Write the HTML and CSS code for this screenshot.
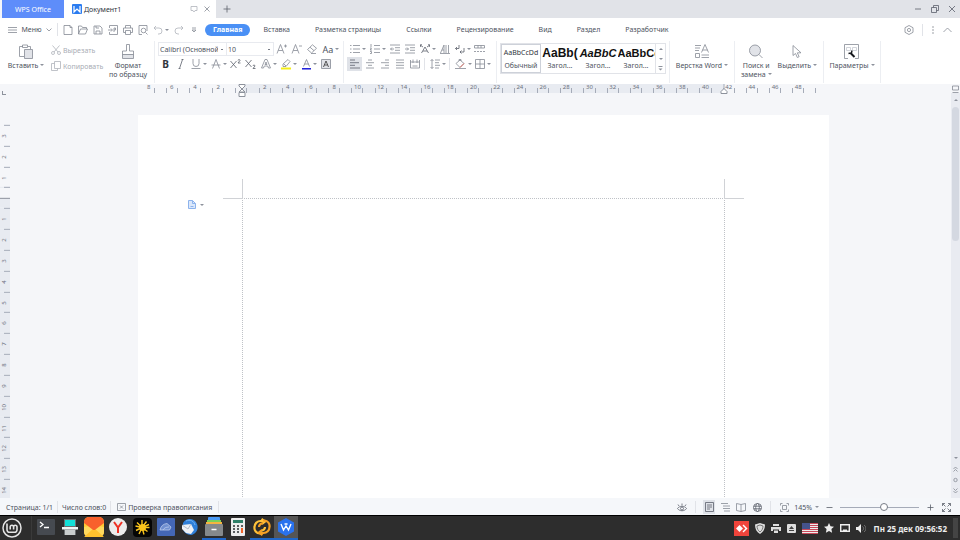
FILE: index.html
```html
<!DOCTYPE html>
<html lang="ru">
<head>
  <meta charset="UTF-8">
  <title>Документ1 - WPS Office</title>
  <link rel="stylesheet" href="styles.css">
</head>
<body>
  <header class="titlebar">
    <button class="home-tab">WPS Office</button>
    <div class="doc-tab">
      <svg width="10" height="10" viewBox="0 0 10 10"><rect width="10" height="10" rx="1" fill="#2b7cf0"/><path d="M2 2v6l3-3 3 3V2" fill="none" stroke="#fff" stroke-width="1.200"/></svg>
      <span class="doc-name">Документ1</span>
      <svg width="8" height="8" viewBox="0 0 8 8" class="thin pale"><path d="M1 1.500h6v4H5L4 7 3 5.500H1z"/></svg>
      <button class="icon-btn" aria-label="Закрыть вкладку"><svg width="8" height="8" viewBox="0 0 8 8" class="thin"><path d="M1.500 1.500l5 5m0-5l-5 5"/></svg></button>
    </div>
    <button class="new-tab" aria-label="Новая вкладка"><svg width="8" height="8" viewBox="0 0 8 8" class="thin dark"><path d="M4 .5v7M.5 4h7"/></svg></button>
    <div class="window-buttons">
      <button aria-label="Свернуть"><svg width="8" height="8" viewBox="0 0 8 8" class="thin dark"><path d="M1 4h6"/></svg></button>
      <button aria-label="Развернуть"><svg width="8" height="8" viewBox="0 0 8 8" class="thin dark"><path d="M.5 2.500h5v5h-5zM2.500 2.500v-2h5v5h-2"/></svg></button>
      <button aria-label="Закрыть"><svg width="8" height="8" viewBox="0 0 8 8" class="thin dark"><path d="M1 1l6 6m0-6L1 7"/></svg></button>
    </div>
  </header>

  <nav class="menubar">
    <button class="menu-btn">
      <svg width="9" height="8" viewBox="0 0 9 8" class="thin"><path d="M0 1.500h9M0 4h9M0 6.500h9"/></svg>
      <span>Меню</span>
      <svg width="6" height="4" viewBox="0 0 6 4" class="thin"><path d="M.5.5L3 3 5.500.5"/></svg>
    </button>
    <div class="quick">
      <button aria-label="Создать"><svg width="10" height="10" viewBox="0 0 10 10" class="thin"><path d="M1 .5h6l2 2v7H1zM7 .5v2h2"/></svg></button>
      <button aria-label="Открыть"><svg width="10" height="10" viewBox="0 0 10 10" class="thin"><path d="M.5 9V1h3l1 1.500h4V4M.5 9l2-5h7l-2 5z"/></svg></button>
      <button aria-label="Сохранить"><svg width="10" height="10" viewBox="0 0 10 10" class="thin"><path d="M1 1h6l2 2v6H1zM3 9V6h4v3M3 1v2h3"/></svg></button>
      <button aria-label="Экспорт в PDF"><svg width="10" height="10" viewBox="0 0 10 10" class="thin"><path d="M1.500 3V.5h8v9h-8V7M0 5h4M3 3.500L4.500 5 3 6.500M6 7V3h1.500v2H6"/></svg></button>
      <button aria-label="Печать"><svg width="10" height="10" viewBox="0 0 10 10" class="thin"><path d="M2.500 3V.5h5V3M2.500 7.500h-2V3h9v4.500h-2M2.500 5.500h5v4h-5z"/></svg></button>
      <button aria-label="Просмотр"><svg width="10" height="10" viewBox="0 0 10 10" class="thin"><path d="M4 9.500H1v-9h8V6M7.500 7.500l2 2"/><circle cx="5.500" cy="5.500" r="2.300"/></svg></button>
      <button aria-label="Отменить" class="split"><svg width="10" height="10" viewBox="0 0 10 10" class="thin pale"><path d="M3 1L1 3l2 2M1 3h5a3 3 0 0 1 0 6H5"/></svg><i class="caret"></i></button>
      <button aria-label="Повторить"><svg width="10" height="10" viewBox="0 0 10 10" class="thin pale"><path d="M7 1l2 2-2 2M9 3H4a3 3 0 0 0 0 6h1"/></svg></button>
      <button aria-label="Настроить панель"><svg width="6" height="6" viewBox="0 0 6 6" class="thin"><path d="M1 1h4M1 3h4L3 5z"/></svg></button>
    </div>
    <div class="tabs">
      <button class="tab active">Главная</button>
      <button class="tab">Вставка</button>
      <button class="tab">Разметка страницы</button>
      <button class="tab">Ссылки</button>
      <button class="tab">Рецензирование</button>
      <button class="tab">Вид</button>
      <button class="tab">Раздел</button>
      <button class="tab">Разработчик</button>
    </div>
    <div class="menubar-end">
      <button aria-label="Настройки"><svg width="10" height="10" viewBox="0 0 10 10" class="thin"><path d="M5 .5l4 2.200v4.600L5 9.500 1 7.300V2.700z"/><circle cx="5" cy="5" r="1.600"/></svg></button>
      <span class="vsep"></span>
      <button aria-label="Ещё"><svg width="4" height="10" viewBox="0 0 4 10" fill="#777c86"><circle cx="2" cy="2" r=".7"/><circle cx="2" cy="5" r=".7"/><circle cx="2" cy="8" r=".7"/></svg></button>
      <button aria-label="Свернуть ленту"><svg width="9" height="6" viewBox="0 0 9 6" class="thin"><path d="M.5 5l4-4 4 4"/></svg></button>
    </div>
  </nav>

  <section class="ribbon">
    <div class="group clipboard">
      <button class="big paste">
        <svg width="14" height="15" viewBox="0 0 14 15" class="thin"><path d="M4 2.500H.5v10H5M9 2.500h2.500V5M3.500 1h5v2.500h-5z"/><path d="M5.500 5.500h8v9h-8z" fill="#e1e3e8"/></svg>
        <span>Вставить<i class="caret"></i></span>
      </button>
      <div class="stack">
        <button class="side" disabled><svg width="10" height="10" viewBox="0 0 10 10" class="thin pale"><path d="M1.500.5L7 7M8.500.5L3 7"/><circle cx="2" cy="8" r="1.500"/><circle cx="8" cy="8" r="1.500"/></svg>Вырезать</button>
        <button class="side" disabled><svg width="10" height="10" viewBox="0 0 10 10" class="thin pale"><path d="M3.500.5h6v7h-6zM3.500 2.500h-3v7h6v-2"/></svg>Копировать</button>
      </div>
      <button class="big format">
        <svg width="12" height="15" viewBox="0 0 12 15" class="thin"><path d="M4.500.5h3V7h4v4H.5V7h4z"/><path d="M.5 10.500h11v4H.5z" fill="#e1e3e8"/></svg>
        <span>Формат<br>по образцу</span>
      </button>
    </div>

    <div class="group font">
      <div class="row">
        <select class="font-name" aria-label="Шрифт"><option>Calibri (Основной текст)</option></select>
        <select class="font-size" aria-label="Размер шрифта"><option>10</option></select>
        <button class="tool" aria-label="Увеличить шрифт"><svg width="12" height="10" viewBox="0 0 12 10" class="thin"><path d="M1 9.500l3.500-9 3.500 9M2.300 6.500h4.500M8 2h3M9.500.5v3"/></svg></button>
        <button class="tool" aria-label="Уменьшить шрифт"><svg width="12" height="10" viewBox="0 0 12 10" class="thin"><path d="M1 9.500l3.500-9 3.500 9M2.300 6.500h4.500M8 2h3"/></svg></button>
        <button class="tool" aria-label="Очистить формат"><svg width="10" height="10" viewBox="0 0 10 10" class="thin"><path d="M.5 5.500L5.500.8l4 3.500L4.500 9zM3 3.200l4 3.500M4 9.500h5"/></svg></button>
        <button class="tool split wide" aria-label="Регистр"><span class="glyph">Aa</span><i class="caret"></i></button>
      </div>
      <div class="row">
        <button class="tool" aria-label="Полужирный"><b class="glyph bold">B</b></button>
        <button class="tool" aria-label="Курсив"><svg width="8" height="10" viewBox="0 0 8 10" class="thin dark"><path d="M5.500.5l-3 9M4.500.5h2M1.500 9.500h2"/></svg></button>
        <button class="tool split" aria-label="Подчёркнутый"><svg width="10" height="10" viewBox="0 0 10 10" class="thin"><path d="M2 0v4.500a3 3 0 0 0 6 0V0M.5 9.500h9"/></svg><i class="caret"></i></button>
        <button class="tool split" aria-label="Зачёркнутый"><svg width="10" height="10" viewBox="0 0 10 10" class="thin"><path d="M1.500 9.500l3.500-9 3.500 9M.5 6h9"/></svg><i class="caret"></i></button>
        <button class="tool" aria-label="Надстрочный"><svg width="11" height="10" viewBox="0 0 11 10" class="thin dark"><path d="M.5 2l6 7m0-7l-6 7M8 1.500c0-1.300 2-1.300 2 0L8 4h2.500"/></svg></button>
        <button class="tool" aria-label="Подстрочный"><svg width="11" height="10" viewBox="0 0 11 10" class="thin dark"><path d="M.5 1l6 7m0-7l-6 7M8 7c0-1.300 2-1.300 2 0L8 9.500h2.500"/></svg></button>
        <button class="tool split" aria-label="Эффекты текста"><svg width="10" height="10" viewBox="0 0 10 10" class="thin"><path d="M.5 9L4 .5h2L9.500 9h-2l-.8-2H3.300l-.8 2zM4 5.500h2L5 3z"/></svg><i class="caret"></i></button>
        <button class="tool split" aria-label="Цвет выделения"><svg width="10" height="11" viewBox="0 0 10 11" class="thin"><path d="M2 7.500V5L7 .5l2 2L5 7.500zM3 5l2 2"/><path d="M0 9.500h10" stroke="#f4ee1a" stroke-width="2"/></svg><i class="caret"></i></button>
        <button class="tool split" aria-label="Цвет шрифта"><svg width="9" height="11" viewBox="0 0 9 11" class="thin"><path d="M1.500 7.500l3-7 3 7M2.500 5h4"/><path d="M0 9.800h9" stroke="#0a0ad6" stroke-width="1.400"/></svg><i class="caret"></i></button>
        <button class="tool" aria-label="Затенение знаков"><svg width="10" height="10" viewBox="0 0 10 10" class="thin"><path d="M.5.5h9v9h-9z" fill="#e1e3e8"/><path d="M2.500 8L5 2l2.500 6M3.500 6h3" stroke="#333"/></svg></button>
      </div>
    </div>

    <div class="group paragraph">
      <div class="row">
        <button class="tool split" aria-label="Маркеры"><svg width="10" height="10" viewBox="0 0 10 10" class="thin"><path d="M3 1.500h7M3 5h7M3 8.500h7M0 1.500h1.500M0 5h1.500M0 8.500h1.500"/></svg><i class="caret"></i></button>
        <button class="tool split" aria-label="Нумерация"><svg width="10" height="10" viewBox="0 0 10 10" class="thin"><path d="M4 1.500h6M4 5h6M4 8.500h6M1 0v3M0 4h1.500L0 6h2M0 7.500h1.500v2H0"/></svg><i class="caret"></i></button>
        <button class="tool" aria-label="Уменьшить отступ"><svg width="10" height="10" viewBox="0 0 10 10" class="thin"><path d="M0 1h10M5 3.700h5M5 6.300h5M0 9h10M4 5H.5M2 3.500L.5 5 2 6.500"/></svg></button>
        <button class="tool" aria-label="Увеличить отступ"><svg width="10" height="10" viewBox="0 0 10 10" class="thin"><path d="M0 1h10M5 3.700h5M5 6.300h5M0 9h10M0 5h3.500M2 3.500L3.500 5 2 6.500"/></svg></button>
        <button class="tool split" aria-label="Азиатская вёрстка"><svg width="10" height="10" viewBox="0 0 10 10" class="thin dark"><path d="M1.500 9L5 3l3.500 6M3 7h4M0 1l3 2M10 1L7 3M.5 3L0 1l2-.3M9.500 3l.5-2-2-.3"/></svg><i class="caret"></i></button>
        <button class="tool" aria-label="Сортировка"><svg width="10" height="10" viewBox="0 0 10 10" class="thin"><path d="M.5 9L4 1v8M2 6h2M6 1v8M8.500 1v8M0 9.500h10"/></svg></button>
        <button class="tool split" aria-label="Знаки абзаца"><svg width="10" height="10" viewBox="0 0 10 10" class="thin dark"><path d="M4 1v3.500H.5M2 3L.5 4.500 2 6M9 4v4H5M6.500 6.500L5 8l1.500 1.500"/></svg><i class="caret"></i></button>
        <button class="tool" aria-label="Табуляция"><svg width="11" height="10" viewBox="0 0 11 10" class="thin"><path d="M.5 1.500h10v2.500H.5zM4 1.500V4M7 1.500V4"/><path d="M0 7.500h11" stroke-dasharray="2 1"/></svg></button>
      </div>
      <div class="row">
        <button class="tool on" aria-label="По левому краю"><svg width="10" height="10" viewBox="0 0 10 10" class="thin dark"><path d="M0 1h5M0 3.700h9M0 6.300h5M0 9h10"/></svg></button>
        <button class="tool" aria-label="По центру"><svg width="10" height="10" viewBox="0 0 10 10" class="thin"><path d="M3 1h4M1 3.700h8M3 6.300h4M1 9h8"/></svg></button>
        <button class="tool" aria-label="По правому краю"><svg width="10" height="10" viewBox="0 0 10 10" class="thin"><path d="M5 1h4M1 3.700h8M5 6.300h4M1 9h8"/></svg></button>
        <button class="tool" aria-label="По ширине"><svg width="10" height="10" viewBox="0 0 10 10" class="thin"><path d="M1 1h8M1 3.700h8M1 6.300h8M1 9h8"/></svg></button>
        <button class="tool" aria-label="Распределить"><svg width="10" height="10" viewBox="0 0 10 10" class="thin"><path d="M.5 1v8h9V1M.5 3h9M3 .5V4M7 .5V4M2.500 7h5"/></svg></button>
        <span class="vsep"></span>
        <button class="tool split" aria-label="Интервал"><svg width="10" height="10" viewBox="0 0 10 10" class="thin"><path d="M5 1h5M5 3.700h4M5 6.300h5M5 9h4M2 .5v9M.5 2L2 .5 3.500 2M.5 8L2 9.500 3.500 8"/></svg><i class="caret"></i></button>
        <span class="vsep"></span>
        <button class="tool split" aria-label="Заливка"><svg width="11" height="10" viewBox="0 0 11 10" class="thin"><path d="M1 4.500L5 1l4 3.500-4 4zM4 2V.5h2V2M0 9.500h11"/><path d="M5 8.500l4-4" stroke="#e05a4a"/></svg><i class="caret"></i></button>
        <button class="tool split" aria-label="Границы"><svg width="10" height="10" viewBox="0 0 10 10" class="thin"><path d="M.5.5h9v9h-9zM5 .5v9M.5 5h9"/></svg><i class="caret"></i></button>
      </div>
    </div>

    <div class="group styles">
      <div class="gallery">
        <button class="style current"><span class="sample">AaBbCcDd</span><span>Обычный</span></button>
        <button class="style"><span class="sample h1">AaBb(</span><span>Загол...</span></button>
        <button class="style"><span class="sample h2">AaBbC</span><span>Загол...</span></button>
        <button class="style"><span class="sample h3">AaBbCc</span><span>Загол...</span></button>
        <div class="gallery-scroll">
          <button aria-label="Вверх"><i class="caret up"></i></button>
          <button aria-label="Вниз"><i class="caret"></i></button>
          <button aria-label="Все стили"><svg width="5" height="5" viewBox="0 0 5 5"><path d="M.5.5h4" stroke="#8d929c"/><path d="M.5 2.500h4l-2 2z" fill="#8d929c"/></svg></button>
        </div>
      </div>
    </div>

    <div class="group layout">
      <button class="big">
        <svg width="14" height="15" viewBox="0 0 14 15" class="thin"><path d="M0 1.500h6M0 4h5M0 6.500h4M6.500 8.500l3.500-8 3.500 8M7.500 6h5M.5 9.500h4v4h-4zM6.500 11h7.500M6.500 13.500h7.500"/></svg>
        <span>Верстка Word<i class="caret"></i></span>
      </button>
    </div>

    <div class="group editing">
      <button class="big">
        <svg width="14" height="15" viewBox="0 0 14 15" class="thin"><circle cx="6" cy="6.500" r="5.500" fill="#e1e3e8"/><path d="M10 10.500l3.500 3.500"/></svg>
        <span>Поиск и<br>замена<i class="caret"></i></span>
      </button>
      <button class="big">
        <svg width="10" height="15" viewBox="0 0 10 15" class="thin"><path d="M1 1.500v10l2.500-2 1.800 4 1.800-.8-1.800-3.900H9z"/></svg>
        <span>Выделить<i class="caret"></i></span>
      </button>
    </div>

    <div class="group params">
      <button class="big">
        <svg width="15" height="15" viewBox="0 0 15 15" class="thin"><path d="M4 14.500H.5V.5h14v14H11"/><path d="M2.500 3.500h4v3h-4zM8.500 3.500h4v3h-4z" stroke="#c5c9d1"/><path d="M6.500 9l4 4" stroke="#15181d" stroke-width="2"/><path d="M4.500 9.500l3-.5.5-2.500" stroke="#15181d" stroke-width="1.400"/></svg>
        <span>Параметры<i class="caret"></i></span>
      </button>
    </div>
  </section>

  <main class="workspace">
    <aside class="vruler">
      <span class="corner"></span>
      <div class="vscale">
        <span>3</span><span>2</span><span>1</span><span class="zero"></span><span class="in">1</span><span class="in">2</span><span class="in">3</span><span class="in">4</span><span class="in">5</span><span class="in">6</span><span class="in">7</span><span class="in">8</span><span class="in">9</span><span class="in">10</span><span class="in">11</span><span class="in">12</span><span class="in">13</span><span class="in">14</span>
      </div>
    </aside>

    <div class="editor">
      <div class="hruler">
        <span class="first">8</span><span>6</span><span>4</span><span>2</span><span class="zero"><svg class="marker" width="8" height="13" viewBox="0 0 8 13"><path d="M1 .5h6v1.500L4 5 1 2zM4 5l3 3H1zM1 8.500h6v4H1z" fill="#fff" stroke="#8d929c"/></svg></span><span>2</span><span>4</span><span>6</span><span>8</span><span>10</span><span>12</span><span>14</span><span>16</span><span>18</span><span>20</span><span>22</span><span>24</span><span>26</span><span>28</span><span>30</span><span>32</span><span>34</span><span>36</span><span>38</span><span>40</span><span class="end">42<svg class="marker" width="8" height="10" viewBox="0 0 8 10"><path d="M4 0v5" stroke="#a5abb8"/><path d="M4 4.500l3 3v2H1v-2z" fill="#fff" stroke="#8d929c"/></svg></span><span>44</span><span>46</span><span>48</span><span class="last"></span>
      </div>
      <article class="page">
        <button class="page-tag" aria-label="Параметры раздела"><svg width="8" height="9" viewBox="0 0 8 9"><path d="M.5.5h4l3 3v5h-7z" fill="#dbe8fb" stroke="#8db3ec"/><path d="M4.500.5v3h3M2.500 6.500h3" fill="none" stroke="#8db3ec"/></svg><i class="caret"></i></button>
        <div class="text-area"><i class="crop left"></i><i class="crop right"></i></div>
      </article>
    </div>

    <aside class="scrollbar">
      <button aria-label="Линейка"><svg width="7" height="8" viewBox="0 0 7 8" class="thin"><path d="M.5 1h6v4h-6zM.5 7.500h6"/></svg></button>
      <button class="scroll-up" aria-label="Вверх"><i class="caret up"></i></button>
      <div class="thumb"></div>
      <div class="scroll-nav">
        <button aria-label="Вниз"><i class="caret"></i></button>
        <button aria-label="Предыдущая страница"><svg width="5" height="6" viewBox="0 0 5 6" class="thin"><path d="M.5 3l2-2 2 2M.5 5.500l2-2 2 2"/></svg></button>
        <button aria-label="Выбор объекта"><svg width="5" height="6" viewBox="0 0 5 6" class="thin"><circle cx="2.500" cy="3" r="1.700"/></svg></button>
        <button aria-label="Следующая страница"><svg width="5" height="6" viewBox="0 0 5 6" class="thin"><path d="M.5.5l2 2 2-2M.5 3l2 2 2-2"/></svg></button>
      </div>
    </aside>
  </main>

  <footer class="statusbar">
    <span>Страница: 1/1</span>
    <span class="vsep"></span>
    <span>Число слов:0</span>
    <span class="vsep"></span>
    <button class="spell"><svg width="9" height="8" viewBox="0 0 9 8" class="thin"><path d="M2 .5H.5v7h8v-7H7M2 .5h5M3 2.500l3 3m0-3l-3 3"/></svg>Проверка правописания</button>
    <span class="vsep"></span>
    <div class="status-right">
      <button class="view" aria-label="Защита глаз"><svg width="10" height="9" viewBox="0 0 10 9" class="thin dark"><path d="M.5 5.500c2-3 7-3 9 0-2 3-7 3-9 0zM5 2.500V.5M2 3L1 1.500M8 3l1-1.500"/><circle cx="5" cy="5.500" r="1.500"/></svg></button>
      <span class="vsep"></span>
      <button class="view on" aria-label="Разметка страницы"><svg width="9" height="10" viewBox="0 0 9 10" class="thin dark"><path d="M.5.5h8v9h-8zM2 3h5M2 5h5M2 7h3"/></svg></button>
      <button class="view" aria-label="Структура"><svg width="9" height="9" viewBox="0 0 9 9" class="thin"><path d="M0 .5h7M2 3h7M2 5.500h7M3 8h6"/></svg></button>
      <button class="view" aria-label="Чтение"><svg width="10" height="9" viewBox="0 0 10 9" class="thin"><path d="M5 1.500L.5.5v7L5 8.500l4.500-1v-7zM5 1.500v7"/></svg></button>
      <button class="view" aria-label="Веб-документ"><svg width="9" height="9" viewBox="0 0 9 9" class="thin dark"><circle cx="4.500" cy="4.500" r="4"/><ellipse cx="4.500" cy="4.500" rx="1.800" ry="4"/><path d="M.5 3.200h8M.5 5.800h8"/></svg></button>
      <span class="vsep"></span>
      <button class="view" aria-label="По размеру"><svg width="9" height="9" viewBox="0 0 9 9" class="thin"><path d="M.5 2.500v-2h2M6.500.5h2v2M8.500 6.500v2h-2M2.500 8.500h-2v-2M2.500 2.500h4v4h-4z"/></svg></button>
      <button class="zoom-value">145%<i class="caret"></i></button>
      <button class="view" aria-label="Уменьшить"><svg width="7" height="7" viewBox="0 0 7 7" class="thin dark"><path d="M.5 3.500h6"/></svg></button>
      <input class="zoom" type="range" min="0" max="100" value="56" aria-label="Масштаб">
      <button class="view" aria-label="Увеличить"><svg width="7" height="7" viewBox="0 0 7 7" class="thin dark"><path d="M.5 3.500h6M3.500.5v6"/></svg></button>
      <button class="view" aria-label="Во весь экран"><svg width="9" height="9" viewBox="0 0 9 9" class="thin dark"><path d="M.5 3V.5H3M.5.5l3 3M6 .5h2.500V3M8.500.5l-3 3M8.500 6v2.500H6M8.500 8.500l-3-3M3 8.500H.5V6M.5 8.500l3-3"/></svg></button>
    </div>
  </footer>

  <div class="taskbar">
    <button class="start" aria-label="Меню"><svg width="20" height="20" viewBox="0 0 20 20" fill="none" stroke="#e4e4e4"><circle cx="10" cy="10" r="9" stroke-width="1.500"/><path d="M5 5.500v6.300a2.500 2.500 0 0 0 2.500 2.500h5a2.500 2.500 0 0 0 2.500-2.500V9a1.700 1.700 0 0 0-3.400 0v2.500M11.600 9A1.700 1.700 0 0 0 8.200 9v2.500" stroke-width="1.600"/></svg></button>
    <div class="apps">
      <button aria-label="Терминал"><svg width="18" height="18" viewBox="0 0 18 18"><rect y="1" width="18" height="16" rx="1" fill="#464a50"/><path d="M3 4l3 2.500L3 9M7 9.500h5" fill="none" stroke="#fff" stroke-width="1.300"/></svg></button>
      <button aria-label="Сканер"><svg width="18" height="18" viewBox="0 0 18 18"><path d="M3 1h12v16H3z" fill="#6b6e70"/><path d="M4 2h10v6H4z" fill="#12e0d8"/><path d="M1 9h16v2.500H1z" fill="#f1f5f5"/><path d="M4 12h10v5H4z" fill="#c9cdcd"/></svg></button>
      <button aria-label="Яндекс Почта"><svg width="20" height="20" viewBox="0 0 20 20"><rect width="20" height="20" rx="5" fill="#ffc832"/><path d="M0 10L10 8l10 2v5a5 5 0 0 1-5 5H5a5 5 0 0 1-5-5z" fill="#ffd95e"/><path d="M0 20L10 11l10 9z" fill="#ffc22e"/><path d="M0 6V5a5 5 0 0 1 5-5h10a5 5 0 0 1 5 5v1l-8.500 6.500a2.500 2.500 0 0 1-3 0z" fill="#f8602c"/></svg></button>
      <button aria-label="Яндекс Браузер"><svg width="18" height="18" viewBox="0 0 18 18"><circle cx="9" cy="9" r="9" fill="#ececec"/><path d="M5 4l4 5.500L13 4M9 9v6" fill="none" stroke="#ee3124" stroke-width="2"/></svg></button>
      <button aria-label="Редактор"><svg width="19" height="19" viewBox="0 0 19 19"><rect width="19" height="19" rx="4" fill="#050505"/><path d="M9 9.500L2.500 8M9 9.500L4 4.500M9 9.500V2M9 9.500l4.500-6M9 9.500l7-3M9 9.500h7.500M9 9.500l5.500 4M9 9.500l2 7M9 9.500l-3 6.500M9 9.500L3 12.500" stroke="#fbc51c" stroke-width="1.400"/><circle cx="9.500" cy="9.500" r="3.500" fill="#fbc51c"/></svg></button>
      <button aria-label="Птица"><svg width="18" height="18" viewBox="0 0 18 18"><rect width="18" height="18" rx="1" fill="#4467b5"/><path d="M3 12c1-4 3-6 7-6.500l4 3.500-1.500 3zM6 12c1-2 3-3 6-3" fill="#6f8fd0" stroke="#c7d5f0" stroke-width=".7"/></svg></button>
      <button aria-label="Thunderbird"><svg width="18" height="18" viewBox="0 0 18 18"><path d="M2 5c3-6 12-5 14 1 2 5-1 10-6 11-4 0-8-3-8-7z" fill="#2f7fd8"/><path d="M1 7l9-1 3 6-3 4-5-1-4-4z" fill="#eef1f5"/><path d="M1 7l6 4 3-5" fill="none" stroke="#b4bdc9"/><path d="M5 3c4-2 8 0 9 4" fill="none" stroke="#73b5f5"/></svg></button>
      <button class="running" aria-label="Файлы"><svg width="18" height="20" viewBox="0 0 18 20"><rect x="3" width="12" height="4" rx="1" fill="#4a9af5"/><path d="M2 3h14v3H2z" fill="#7bd05a"/><path d="M1 5h16v3H1z" fill="#f6b440"/><rect y="7" width="18" height="12" rx="1" fill="#85898b"/><path d="M6.500 12.500h5" stroke="#fff" stroke-width="1.500"/></svg></button>
      <button aria-label="Калькулятор"><svg width="14" height="18" viewBox="0 0 14 18"><rect width="14" height="18" rx="1" fill="#eceded"/><path d="M2 2h10v3H2z" fill="#2f8068"/><path d="M2 8h2M6 8h2M10 8h2M2 11h2M6 11h2M2 14h2M6 14h2" stroke="#5b5f61" stroke-width="1.800"/><path d="M10 10h2v5h-2z" fill="#f2652a"/></svg></button>
      <button class="running" aria-label="Обновления"><svg width="18" height="18" viewBox="0 0 18 18" fill="none" stroke-width="2.200"><path d="M9 15.500H7A5.500 5.500 0 0 1 1.500 9 6 6 0 0 1 8 3h3M8.500 1L12 3.500 9 6M12 9a3.500 3.500 0 0 1-4 3.500" stroke="#ffc23a"/><path d="M10 2.500h1.500A5.500 5.500 0 0 1 16.500 9a6 6 0 0 1-6 6H8M9.500 17L6 14.500 9 12M6 9a3.500 3.500 0 0 1 4-3.500" stroke="#f5a024"/></svg></button>
      <button class="running focused" aria-label="WPS Office"><svg width="18" height="18" viewBox="0 0 18 18"><path d="M9 0l8 4.500v9L9 18l-8-4.500v-9z" fill="#2a72ee"/><path d="M4 6l2.500 6L9 8l2.500 4L14 6M7.500 6h3" fill="none" stroke="#fff" stroke-width="1.400"/></svg></button>
    </div>
    <div class="tray">
      <svg width="15" height="15" viewBox="0 0 15 15"><path d="M0 0h15v15H0z" fill="#ef443b"/><path d="M5.500 4L9 7.500 5.500 11 2 7.500z" fill="#fff"/><path d="M8.500 4.500l1-1 4 4-4 4-1-1 3-3z" fill="#fff"/></svg>
      <svg width="10" height="11" viewBox="0 0 10 11"><path d="M5 0l5 1.500C10 6 8.500 9 5 11 1.500 9 0 6 0 1.500z" fill="#dedede"/><path d="M5 2l3 1c0 2.500-1 4.500-3 6-2-1.500-3-3.500-3-6z" fill="none" stroke="#777"/></svg>
      <svg width="10" height="9" viewBox="0 0 10 9" fill="#dedede"><path d="M2 0h6v2H2zM0 3h10v4H8V5.500H2V7H0zM3 6.500h4V9H3z"/></svg>
      <svg width="9" height="9" viewBox="0 0 9 9"><rect width="9" height="9" rx="1" fill="#dedede"/><path d="M4.500 2L7 5H2zM2 6h5v1H2z" fill="#444"/></svg>
      <svg width="16" height="11" viewBox="0 0 16 11"><path d="M0 0h16v11H0z" fill="#eee"/><path d="M0 .5h16M0 2.500h16M0 4.500h16M0 6.500h16M0 8.500h16M0 10.500h16" stroke="#c8495a"/><path d="M0 0h8v6H0z" fill="#45538c"/></svg>
      <svg width="10" height="10" viewBox="0 0 10 10"><path d="M5 0l1.500 3.300L10 3.700 7.400 6.100 8.100 9.700 5 7.900 1.900 9.700 2.600 6.100 0 3.700l3.500-.4z" fill="#eee"/></svg>
      <svg width="10" height="9" viewBox="0 0 10 9"><path d="M.7.7h8.600v6.600H.7z" fill="none" stroke="#eee" stroke-width="1.400"/><path d="M3 5.500h4V8H3z" fill="#eee"/></svg>
      <svg width="10" height="9" viewBox="0 0 10 9"><path d="M0 3h2l3-3v9L2 6H0z" fill="#eee"/><path d="M6.500 2.500c1.500 1 1.500 3 0 4M8 1c2.500 2 2.500 5 0 7" fill="none" stroke="#777"/></svg>
      <time>Пн 25 дек 09:56:52</time>
      <span class="show-desktop"></span>
    </div>
  </div>
</body>
</html>
```
FILE: styles.css
```css
* {
  box-sizing: border-box;
}

body {
  display: flex;
  flex-direction: column;
  height: 100vh;
  margin: 0;
  overflow: hidden;
  background: #fff;
  color: #4d535e;
  font-family: "Noto Sans", "DejaVu Sans", sans-serif;
  font-size: 7px;
  line-height: 9px;
}

button, select {
  margin: 0;
  padding: 0;
  border: 0;
  background: none;
  color: inherit;
  font: inherit;
}

button {
  display: flex;
  align-items: center;
  justify-content: center;
  white-space: nowrap;
}

svg {
  display: block;
  flex: none;
}

.thin {
  fill: none;
  stroke: #858a94;
  stroke-width: 0.8;
}

.thin.pale {
  stroke: #b0b4bb;
}

.thin.dark {
  stroke: #5a606b;
}

.caret {
  display: inline-block;
  flex: none;
  border: 2px solid transparent;
  border-top-color: #8d929c;
  border-bottom: 0;
}

.caret.up {
  border-top: 0;
  border-bottom: 2px solid #8d929c;
}

.vsep {
  flex: none;
  width: 1px;
  height: 12px;
  background: #e1e3e8;
}

/* title bar */
.titlebar {
  display: flex;
  flex: none;
  height: 18px;
  background: #e1e3e8;
}

.home-tab {
  width: 64px;
  border-left: 2px solid #f5f6f9;
  background: #5e8dfa;
  color: #fff;
}

.doc-tab {
  display: flex;
  align-items: center;
  gap: 2px;
  width: 152px;
  padding: 0 5px 0 8px;
  background: #fff;
}

.doc-name {
  flex: 1;
  color: #30353d;
}

.icon-btn {
  margin-left: 3px;
}

.new-tab {
  width: 22px;
}

.window-buttons {
  display: flex;
  gap: 9px;
  margin-left: auto;
  padding-right: 4px;
}

/* menu row */
.menubar {
  display: flex;
  flex: none;
  align-items: center;
  height: 23px;
}

.menu-btn {
  gap: 4px;
  width: 58px;
  height: 13px;
  padding-left: 3px;
  border-right: 1px solid #e1e3e8;
}

.quick {
  display: flex;
  width: 147px;
  padding-left: 2px;
}

.quick button {
  width: 15px;
}

.quick .split {
  gap: 2px;
  width: 21px;
}

.tabs {
  display: flex;
  gap: 1px;
}

.tab {
  height: 12px;
  padding: 0 12px;
}

.tab.active {
  padding: 0 8px;
  border-radius: 6px;
  background: #4a90f5;
  color: #fff;
  font-weight: bold;
}

.menubar-end {
  display: flex;
  align-items: center;
  gap: 8px;
  margin-left: auto;
  padding-right: 8px;
}

/* ribbon */
.ribbon {
  display: flex;
  flex: none;
  height: 43px;
  padding-bottom: 1px;
}

.group {
  display: flex;
  flex: none;
  border-right: 1px solid #eceef2;
}

.big {
  flex-direction: column;
  justify-content: flex-start;
  gap: 2px;
  padding-top: 3px;
}

.big .caret {
  margin-left: 2px;
  vertical-align: 2px;
}

.clipboard {
  width: 155px;
  padding-left: 7px;
}

.paste {
  width: 38px;
}

.format {
  width: 52px;
}

.stack {
  display: flex;
  flex-direction: column;
  gap: 2px;
  width: 57px;
  padding: 2px 0 0 6px;
}

.side {
  gap: 2px;
  justify-content: flex-start;
  height: 14px;
  color: #a9adb5;
}

.font, .paragraph {
  flex-direction: column;
  gap: 1px;
  padding-top: 1px;
}

.font {
  width: 189px;
  padding-left: 3px;
}

.paragraph {
  width: 153px;
  padding-left: 3px;
}

.row {
  display: flex;
  align-items: center;
  height: 14px;
}

.font-name, .font-size {
  height: 14px;
  padding: 0 8px 0 1px;
  border: 1px solid #e8eaef;
  appearance: none;
  background: linear-gradient(#777c86, #777c86) right 3px center / 2px 1px no-repeat;
}

.font-name {
  width: 69px;
}

.font-size {
  width: 47px;
  border-left: 0;
}

.tool {
  width: 15px;
  height: 14px;
}

.tool.split {
  gap: 2px;
  width: 20px;
  padding-left: 2px;
}

.tool.wide {
  width: 22px;
}

.tool.on {
  background: #dfe2e8;
}

.glyph {
  font-size: 9px;
}

.glyph.bold {
  color: #30353d;
  font-size: 10px;
}

.row .vsep {
  margin: 0 2px;
}

.styles {
  width: 173px;
  padding: 2px 3px 10px 3px;
}

.gallery {
  display: flex;
  width: 166px;
  height: 31px;
  border: 1px solid #e1e3e8;
}

.style {
  flex: 1;
  flex-direction: column;
  min-width: 0;
  overflow: hidden;
}

.style.current {
  border: 1px solid #cdd1d9;
}

.sample {
  height: 14px;
  color: #30353d;
  line-height: 12px;
}

.h1, .h2, .h3 {
  color: #111;
  font-family: "Liberation Sans", sans-serif;
  font-weight: bold;
}

.h1 {
  font-size: 12px;
}

.h2 {
  font-size: 11px;
  font-style: italic;
}

.h3 {
  width: 37px;
  overflow: hidden;
  font-size: 11px;
}

.gallery-scroll {
  display: flex;
  flex-direction: column;
  width: 10px;
  border-left: 1px solid #e1e3e8;
}

.gallery-scroll button {
  flex: 1;
}

.layout {
  width: 65px;
  justify-content: center;
}

.editing {
  width: 89px;
  justify-content: center;
  gap: 6px;
}

.params {
  width: 57px;
  justify-content: center;
}

/* rulers and page */
.workspace {
  display: flex;
  flex: 1;
  min-height: 0;
  overflow: hidden;
  background: #f5f6f9;
}

.vruler {
  display: flex;
  flex: none;
  flex-direction: column;
  width: 10px;
  color: #6d727d;
  font-size: 6px;
}

.corner {
  width: 4px;
  height: 4px;
  margin: 7px 0 30px 2px;
  border: 1px solid #8d929c;
  border-width: 0 0 1px 1px;
}

.vscale {
  display: flex;
  flex: 1;
  flex-direction: column;
  margin-bottom: -2px;
}

.vscale span {
  flex: 1;
  padding-left: 2px;
  border-bottom: 1px solid;
  border-image: linear-gradient(to right, #a5abb8 60%, transparent 60%) 1;
  line-height: 8px;
  text-align: center;
  transform: rotate(180deg);
  writing-mode: vertical-rl;
}

.vscale .in {
  background: #e8ebf1;
}

.vscale .zero {
  background: linear-gradient(#e8ebf1 9px, #8d929c 9px, #8d929c 10px, transparent 10px);
}

.editor {
  flex: 1;
  min-width: 0;
}

.hruler {
  display: flex;
  width: 696px;
  height: 9px;
  margin-left: 127px;
  background: linear-gradient(#e8ebf1, #e8ebf1) 105px 0 / 482px 9px no-repeat;
  color: #6d727d;
  font-size: 6px;
  line-height: 7px;
}

.hruler span {
  position: relative;
  flex: 1;
  background: linear-gradient(#a5abb8, #a5abb8) 25% 4px / 1px 5px no-repeat, linear-gradient(#a5abb8, #a5abb8) 75% 4px / 1px 5px no-repeat;
  text-align: center;
}

.hruler .first {
  background: linear-gradient(#a5abb8, #a5abb8) 75% 4px / 1px 5px no-repeat;
}

.hruler .last {
  background: linear-gradient(#a5abb8, #a5abb8) 25% 4px / 1px 5px no-repeat;
}

.marker {
  position: absolute;
  top: 0;
  left: 8px;
}

.end .marker {
  left: 3px;
}

.page {
  display: flex;
  position: relative;
  width: 691px;
  height: 100%;
  margin: 22px 0 0 128px;
  padding: 83px 104px 0;
  background: #fff;
}

.page-tag {
  position: absolute;
  top: 85px;
  left: 50px;
  gap: 4px;
}

.text-area {
  position: relative;
  flex: 1;
  border: 1px dotted #bfc2c7;
}

.crop {
  position: absolute;
  top: -20px;
  width: 20px;
  height: 20px;
  border-bottom: 1px solid #d0d2d6;
}

.crop.left {
  right: 100%;
  border-right: 1px solid #d0d2d6;
}

.crop.right {
  left: 100%;
  border-left: 1px solid #d0d2d6;
}

.scrollbar {
  display: flex;
  flex: none;
  flex-direction: column;
  align-items: center;
  width: 9px;
  background: #e9ebf1;
}

.scrollbar > button {
  width: 9px;
  height: 9px;
  background: #f5f6f9;
}

.scrollbar .scroll-up {
  height: 14px;
  background: none;
}

.thumb {
  width: 7px;
  height: 134px;
  border-radius: 4px;
  background: #d4d8e1;
}

.scroll-nav {
  display: flex;
  flex-direction: column;
  gap: 5px;
  margin-top: auto;
  padding-bottom: 4px;
}

.scroll-nav button {
  height: 6px;
}

/* status bar */
.statusbar {
  display: flex;
  flex: none;
  align-items: center;
  gap: 4px;
  height: 18px;
  padding: 1px 8px 0 6px;
  border-bottom: 1px solid #000;
  background: #f5f7fa;
}

.spell {
  gap: 2px;
  padding: 0 2px;
}

.status-right {
  display: flex;
  align-items: center;
  gap: 4px;
  margin-left: auto;
}

.status-right .vsep {
  margin: 0 3px;
}

.view {
  width: 12px;
  height: 14px;
}

.view.on {
  background: #dfe2e8;
}

.zoom-value {
  gap: 3px;
}

.zoom {
  width: 79px;
  height: 8px;
  margin: 0 1px;
  appearance: none;
  background: linear-gradient(#a5abb8, #a5abb8) center / 100% 1px no-repeat;
}

.zoom::-webkit-slider-thumb {
  width: 8px;
  height: 8px;
  appearance: none;
  border: 1px solid #777c86;
  border-radius: 50%;
  background: #fff;
}

/* desktop panel */
.taskbar {
  display: flex;
  flex: none;
  align-items: center;
  height: 24px;
  background: #2d2d2d;
  color: #eee;
}

.start {
  width: 32px;
  height: 24px;
  padding-right: 7px;
  border-right: 1px solid #3a3a3a;
}

.apps {
  display: flex;
  padding-left: 2px;
}

.apps button {
  width: 24px;
  height: 24px;
  border-bottom: 2px solid transparent;
}

.apps .running {
  border-color: #1f66c8;
}

.apps .focused {
  background: #555;
}

.tray {
  display: flex;
  align-items: center;
  gap: 6px;
  margin-left: auto;
  padding-right: 2px;
}

.tray time {
  margin-left: 2px;
  font-size: 8px;
  font-weight: bold;
}

.show-desktop {
  width: 5px;
  height: 20px;
  background: #444;
}
```
